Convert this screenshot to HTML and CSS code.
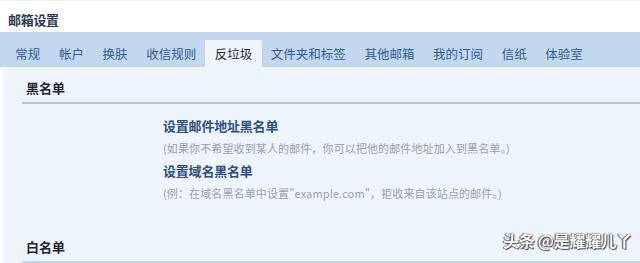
FILE: index.html
```html
<!DOCTYPE html>
<html lang="zh-CN">
<head>
<meta charset="utf-8">
<title>邮箱设置</title>
<link rel="stylesheet" href="styles.css">
</head>
<body>
<div class="page">
  <div class="header"><span class="title">邮箱设置</span></div>
  <div class="tabs">
    <span class="tab">常规</span>
    <span class="tab">帐户</span>
    <span class="tab">换肤</span>
    <span class="tab">收信规则</span>
    <span class="tab active">反垃圾</span>
    <span class="tab">文件夹和标签</span>
    <span class="tab">其他邮箱</span>
    <span class="tab">我的订阅</span>
    <span class="tab">信纸</span>
    <span class="tab">体验室</span>
  </div>
  <div class="content">
    <div class="section-head">黑名单</div>
    <div class="items">
      <div class="item-title">设置邮件地址黑名单</div>
      <div class="item-desc">(如果你不希望收到某人的邮件，你可以把他的邮件地址加入到黑名单。)</div>
      <div class="item-title">设置域名黑名单</div>
      <div class="item-desc">(例：在域名黑名单中设置"example.com"，拒收来自该站点的邮件。)</div>
    </div>
    <div class="section-head second">白名单</div>
  </div>
  <div class="watermark">头条 @是耀耀儿丫</div>
</div>
</body>
</html>
```

FILE: styles.css
```css
html, body {
  margin: 0;
  padding: 0;
  background: #ffffff;
}
body {
  font-family: "Noto Sans CJK SC", "Microsoft YaHei", "Noto Sans", sans-serif;
  overflow: hidden;
}
.page {
  position: relative;
  width: 640px;
  height: 263px;
  overflow: hidden;
}
.header {
  height: 32px;
  box-sizing: border-box;
  padding: 6px 0 0 8px;
  border-top: 1px solid #f0f0f0;
  display: flex;
  align-items: center;
}
.title {
  font-size: 13px;
  font-weight: bold;
  color: #2b3b55;
  letter-spacing: -0.3px;
}
.tabs {
  height: 35px;
  background: #c3d8ef;
  display: flex;
  align-items: flex-end;
  padding-left: 6px;
  box-sizing: border-box;
}
.tab {
  height: 27px;
  line-height: 27px;
  padding: 0 9.3px;
  font-size: 12.5px;
  color: #2f5d91;
  white-space: nowrap;
}
.tab.active {
  background: #eff5fc;
  color: #1c2638;
}
.content {
  margin-left: 3px;
  background: #eef4fc;
  height: 200px;
  padding-top: 0;
}
.section-head {
  margin-left: 19px;
  padding: 13px 0 6px 4px;
  line-height: 16px;
  font-size: 13px;
  font-weight: bold;
  color: #1f2533;
  border-bottom: 2px solid #b4c2d2;
}
.section-head.second {
  margin-top: 21px;
  border-bottom-color: #c3d6ee;
}
.items {
  padding: 11px 0 0 160px;
}
.item-title {
  font-size: 13px;
  line-height: 22px;
  font-weight: bold;
  color: #2c5181;
  letter-spacing: -0.2px;
}
.item-desc {
  font-size: 11px;
  line-height: 23px;
  color: #9a9fa8;
  letter-spacing: 0.12px;
}
.watermark {
  position: absolute;
  right: 8px;
  bottom: 11px;
  font-size: 16px;
  color: #ffffff;
  font-weight: bold;
  text-shadow: 0 0 1px #333, 1px 1px 1px #444, -1px 0 1px #555;
  letter-spacing: -0.3px;
}
```
